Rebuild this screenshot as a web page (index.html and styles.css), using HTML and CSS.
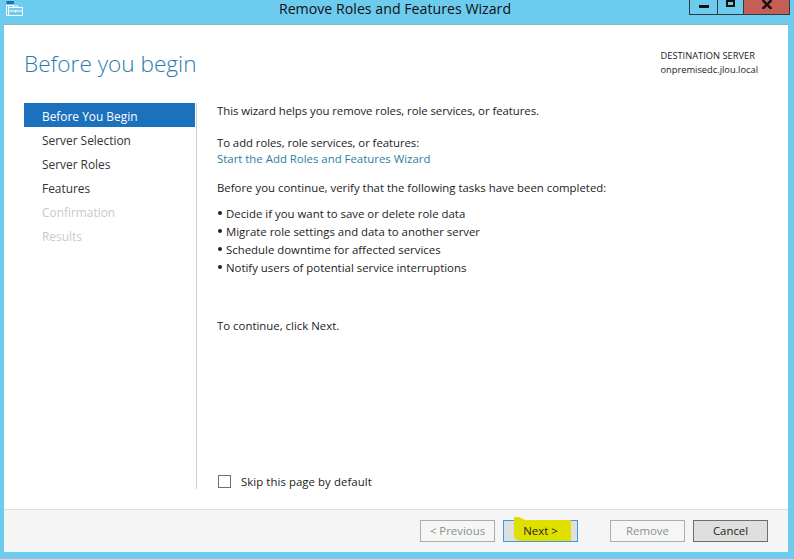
FILE: index.html
```html
<!DOCTYPE html>
<html lang="en">
<head>
<meta charset="utf-8">
<title>Remove Roles and Features Wizard</title>
<link rel="stylesheet" href="styles.css">
</head>
<body>
<div class="window">
  <header class="titlebar">
    <svg class="app-icon" width="17" height="16" viewBox="0 0 17 16">
      <rect x="0.500" y="1" width="7.500" height="3" fill="#1f6fb5"/>
      <path d="M0.500 5V15.500H16.500V7.500H2.500V15M2.500 5V7" fill="none" stroke="#fff"/>
      <rect x="1" y="5" width="7" height="1" fill="#fff"/>
      <path d="M3 11H16M7 7.500V6H12V7.500M9.500 10V12.500" fill="none" stroke="#fff"/>
    </svg>
    <div class="title">Remove Roles and Features Wizard</div>
    <div class="controls">
      <div class="ctl ctl-min"><svg width="10" height="3" viewBox="0 0 10 3"><rect width="10" height="3" fill="#111"/></svg></div>
      <div class="ctl ctl-max"><svg width="9" height="7" viewBox="0 0 9 7"><path d="M1 1H8V6H1Z" fill="none" stroke="#111" stroke-width="2"/></svg></div>
      <div class="ctl ctl-close"><svg width="10" height="9" viewBox="0 0 10 9"><path d="M0.500 0L9.500 9M9.500 0L0.500 9" fill="none" stroke="#111" stroke-width="2.400"/></svg></div>
    </div>
  </header>
  <div class="panel">
    <div class="head">
      <h1 class="heading">Before you begin</h1>
      <div class="server">
        <div>DESTINATION SERVER</div>
        <div>onpremisedc.jlou.local</div>
      </div>
    </div>
    <div class="body">
      <nav class="steps">
        <div class="step step-active">Before You Begin</div>
        <div class="step">Server Selection</div>
        <div class="step">Server Roles</div>
        <div class="step">Features</div>
        <div class="step step-off">Confirmation</div>
        <div class="step step-off">Results</div>
      </nav>
      <main class="content">
        <div class="copy">
          <p class="intro">This wizard helps you remove roles, role services, or features.</p>
          <p class="add">To add roles, role services, or features:</p>
          <a class="link">Start the Add Roles and Features Wizard</a>
          <p class="verify">Before you continue, verify that the following tasks have been completed:</p>
          <ul class="tasks">
            <li>Decide if you want to save or delete role data</li>
            <li>Migrate role settings and data to another server</li>
            <li>Schedule downtime for affected services</li>
            <li>Notify users of potential service interruptions</li>
          </ul>
          <p class="next-note">To continue, click Next.</p>
        </div>
        <label class="skip"><span class="check"></span><span class="skip-label">Skip this page by default</span></label>
      </main>
    </div>
    <footer class="footer">
      <div class="btn btn-off">&lt; Previous</div>
      <div class="btn btn-next"><span class="marker"></span><span class="btn-label">Next &gt;</span></div>
      <div class="btn btn-off btn-remove">Remove</div>
      <div class="btn btn-cancel">Cancel</div>
    </footer>
  </div>
</div>
</body>
</html>
```
FILE: styles.css
```css
* { box-sizing: border-box; }
html, body { margin: 0; padding: 0; }
body {
  width: 794px;
  height: 559px;
  overflow: hidden;
  background: #6dcbee;
  font-family: "Open Sans", "Noto Sans", sans-serif;
  font-size: 11.400px;
  color: #1c1c1c;
}
.window { position: relative; width: 794px; height: 559px; padding: 0 6px 7px 4px; display: flex; flex-direction: column; }
.titlebar { height: 24px; flex: none; display: flex; justify-content: center; }
.app-icon { position: absolute; left: 6px; top: 0; }
.title { font-size: 14.200px; line-height: 17px; color: #111; margin-left: -2px; }
.controls { position: absolute; left: 689px; top: 0; display: flex; height: 15px; border: 1px solid #2b3a44; border-top: 0; }
.ctl { display: flex; justify-content: center; }
.ctl-min { width: 28px; border-right: 1px solid #2b3a44; padding-top: 5px; }
.ctl-max { width: 25px; padding-top: 0; }
.ctl-close { width: 46px; background: #c45f55; border-left: 1px solid #2b3a44; }
.panel { flex: 1; background: #fff; border-top: 1px solid #8fb4c4; display: flex; flex-direction: column; min-height: 0; }
.head { height: 78px; flex: none; display: flex; justify-content: space-between; }
.heading { margin: 22px 0 0 20px; font-size: 22.600px; line-height: 33px; font-weight: 300; color: #2a7bad; }
.server { margin: 24px 30px 0 0; font-size: 9.300px; line-height: 13.500px; color: #222; }
.body { flex: 1; display: flex; min-height: 0; padding: 0 0 20px 20px; }
.steps { width: 173px; flex: none; border-right: 1px solid #cfcfcf; padding-right: 1px; }
.step { height: 24px; line-height: 27px; padding-left: 18px; color: #333; font-size: 11.900px; }
.step-active { background: #1b71bb; color: #fff; }
.step-off { color: #c9c9c9; }
.content { flex: 1; display: flex; flex-direction: column; justify-content: space-between; padding-left: 20px; }
.copy { line-height: 15.500px; }
.copy p { margin: 0; }
.intro { letter-spacing: -0.060px; }
.copy .add { margin-top: 16px; letter-spacing: -0.070px; }
.link { display: block; margin-top: 1px; color: #2a7f9e; }
.copy .verify { margin-top: 13px; }
.tasks { list-style: none; margin: 10px 0 0; padding: 0; }
.tasks li { height: 18px; line-height: 18px; padding-left: 9px; position: relative; }
.tasks li::before { content: ""; position: absolute; left: 1px; top: 6px; width: 4px; height: 4px; border-radius: 50%; background: #222; }
.copy .next-note { margin-top: 41px; }
.skip { display: flex; align-items: center; gap: 10px; height: 16px; }
.skip-label { letter-spacing: 0.060px; }
.check { width: 13px; height: 13px; border: 1px solid #6e6e6e; background: #fff; margin-left: 1px; }
.footer { height: 43px; flex: none; background: #f5f5f5; border-top: 1px solid #dcdcdc; display: flex; padding: 10px 0 0 416px; }
.btn { width: 75px; height: 22px; line-height: 20px; text-align: center; border: 1px solid #adadad; background: #f4f7f4; color: #8b8b8b; }
.btn-off { color: #8f8f8f; }
.btn-next { margin-left: 8px; position: relative; background: #dde0dd; border-color: #3f96e6; color: #1c1c1c; }
.btn-label { position: relative; }
.marker { position: absolute; left: 10px; top: -4px; width: 57px; height: 24px; background: #e0e000; border-bottom-left-radius: 6px; clip-path: polygon(0 0, 5px 0, 11px 3px, 100% 3px, 100% 100%, 0 100%); }
.btn-remove { margin-left: 32px; }
.btn-cancel { margin-left: 8px; background: #dde0dd; border-color: #6e6e6e; color: #1c1c1c; }
```
